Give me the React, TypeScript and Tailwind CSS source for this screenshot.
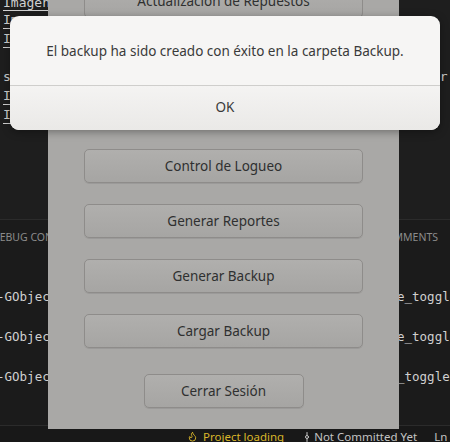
import { Flame, GitCommitVertical } from "lucide-react";

const mono = "font-['DejaVu_Sans_Mono',monospace]";
const ui = "font-['Noto_Sans',sans-serif]";

const editorRows = [
  { left: "Imagen_repuesto.png", right: "", link: true },
  { left: "Imagen_repuesto.png", right: "", link: true },
  { left: "", right: "", link: false },
  { left: "self.builder.get_object", right: "er", link: false },
  { left: "Imagen_repuesto.png", right: "", link: true },
  { left: "Imagen_repuesto.png", right: "", link: true },
];

const terminal = [
  { left: "-GObject-CRITICAL", right: "e_toggled" },
  { left: "-GObject-CRITICAL", right: "e_toggled" },
  { left: "-GObject-CRITICAL", right: "_toggled" },
];

const menu = [
  "Actualización de Repuestos",
  "Gestión de Clientes",
  "Gestión de Usuarios",
  "Control de Logueo",
  "Generar Reportes",
  "Generar Backup",
  "Cargar Backup",
];

function GtkButton({ label, className = "" }: { label: string; className?: string }) {
  return (
    <button
      className={
        "flex h-[34px] shrink-0 items-center justify-center rounded-[5px] border border-[#8e8c8a] bg-linear-to-b from-[#b0afad] to-[#a6a5a3] text-[13.5px] text-[#2f3030] shadow-[0_1px_0_rgba(0,0,0,0.08)] " +
        className
      }
    >
      {label}
    </button>
  );
}

export default function App() {
  return (
    <div className={"relative h-[442px] w-[450px] overflow-hidden bg-[#1e1e1e] " + ui}>
      {/* editor */}
      <div className={"h-[219px] overflow-hidden text-[13px] text-[#d0d0d0] " + mono}>
        <div className="h-[10px] whitespace-nowrap pl-[3px] leading-[6px] underline underline-offset-[3px]">
          Imagenes del sistema
        </div>
        {editorRows.map((r, i) => (
          <div key={i} className="flex h-[19px] justify-between overflow-hidden whitespace-nowrap leading-[19px]">
            <span className={"pl-[3px] " + (r.link ? "underline underline-offset-[4px]" : "")}>{r.left}</span>
            <span className="w-[18px] shrink-0">{r.right}</span>
          </div>
        ))}
      </div>

      {/* panel */}
      <div className="flex h-[206px] flex-col border-t border-[#2b2b2b] bg-[#1b1b1b]">
        <div className="flex h-[36px] items-center justify-between whitespace-nowrap text-[10.5px] text-[#8b8b8b]">
          <span className="ml-[-8px]">DEBUG CONSOLE</span>
          <span className="pr-[12px]">COMMENTS</span>
        </div>
        <div className={"mt-[32px] flex flex-col gap-[21px] text-[12.5px] text-[#d0d0d0] " + mono}>
          {terminal.map((t, i) => (
            <div key={i} className="flex h-[19px] items-center justify-between whitespace-nowrap">
              <span className="ml-[-3px] overflow-hidden">{t.left}</span>
              <span className="w-[53px] shrink-0 overflow-hidden">{t.right}</span>
            </div>
          ))}
        </div>
      </div>

      {/* status bar */}
      <div className="flex h-[22px] items-center whitespace-nowrap border-t border-[#2b2b2b] bg-[#181818] pl-[187px] text-[11.5px]">
        <Flame size={11} className="shrink-0 text-[#d9b62a]" strokeWidth={2} />
        <span className="ml-[5px] shrink-0 text-[#d9b62a]">Project loading</span>
        <GitCommitVertical size={12} className="ml-[17px] shrink-0 text-[#c3c3c3]" strokeWidth={2} />
        <span className="ml-[1px] shrink-0 text-[#c3c3c3]">Not Committed Yet</span>
        <span className="ml-[17px] shrink-0 text-[#c3c3c3]">Ln 1</span>
      </div>

      {/* GTK main window */}
      <div className="absolute left-[48px] top-0 flex h-[429px] w-[351px] flex-col bg-[#a9a8a6] px-[36px]">
        <div className="mt-[-16px] flex flex-col gap-[21px]">
          {menu.map((m) => (
            <GtkButton key={m} label={m} />
          ))}
        </div>
        <GtkButton label="Cerrar Sesión" className="mx-auto mt-[26px] w-[160px]" />
      </div>

      {/* message dialog */}
      <div className="absolute left-[10px] top-[16px] flex h-[114px] w-[430px] flex-col overflow-hidden rounded-[9px] bg-[#f6f5f4] shadow-[0_2px_8px_rgba(0,0,0,0.35)]">
        <div className="flex h-[69px] items-center justify-center pt-[1px] text-[13.5px] text-[#3a3a3a]">
          El backup ha sido creado con éxito en la carpeta Backup.
        </div>
        <div className="flex flex-1 items-center justify-center border-t border-[#cfcecc] bg-linear-to-b from-[#f4f3f2] to-[#eae9e7] pb-[2px] text-[13.5px] text-[#3a3a3a]">
          OK
        </div>
      </div>
    </div>
  );
}
